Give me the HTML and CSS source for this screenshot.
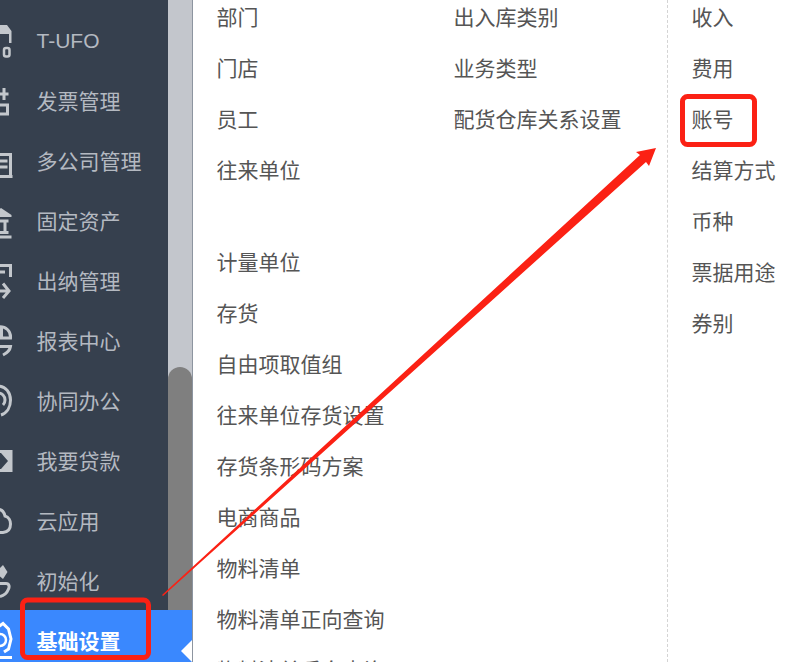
FILE: index.html
```html
<!DOCTYPE html>
<html>
<head>
<meta charset="utf-8">
<title>基础设置</title>
<link rel="stylesheet" href="styles.css">
</head>
<body>
<div class="app">
  <div class="side">
    <div class="side-top">
      <ul class="menu">
        <li class="menu-item latin">
          <svg class="ico" viewBox="0 0 14 40"><path class="fill" d="M-2 5 H7 L11.500 11 V23 H9 V14 H-2Z"/><rect class="thin" x="4" y="28" width="5.500" height="8.500" rx="2"/></svg>
          <span>T-UFO</span>
        </li>
        <li class="menu-item">
          <svg class="ico" viewBox="0 0 14 40"><path d="M4 8 V20 M-2 14 H8.500 M-2 25 H7.500 V34 H-2"/></svg>
          <span>发票管理</span>
        </li>
        <li class="menu-item">
          <svg class="ico" viewBox="0 0 14 40"><path d="M-2 14.500 H10.500 V36.500 M-2 21 H7.500 M-2 27 H7.500 M-2 36.500 H12.500"/></svg>
          <span>多公司管理</span>
        </li>
        <li class="menu-item">
          <svg class="ico" viewBox="0 0 14 40"><path class="fill" d="M-2 10 L1 8 L11.500 15 V17 H-2Z"/><path d="M5 21 V33 M-2 21 H8.500 M-2 32.500 H8.500 M-2 37 H11.500"/></svg>
          <span>固定资产</span>
        </li>
        <li class="menu-item">
          <svg class="ico" viewBox="0 0 14 40"><path d="M-2 5.500 H10.500 V17 M-2 12 H5 M-2 31 H8 M3 23.500 L9 31 L3 38"/></svg>
          <span>出纳管理</span>
        </li>
        <li class="menu-item">
          <svg class="ico" viewBox="0 0 14 40"><path d="M-2 7 C6 6 11 11 10.500 18 H-2 M-2 26.500 H10.500 C10 30 7 33 3 35"/><path class="fill" d="M-2 7 H3 V18 H-2Z"/></svg>
          <span>报表中心</span>
        </li>
        <li class="menu-item">
          <svg class="ico" viewBox="0 0 14 40"><path d="M-2 6 C6 6 10.500 13 10.500 20 C10.500 27 7 33 1 35 M-2 13 C2 13 5 16 5 20 C5 22 4 24 3 25"/></svg>
          <span>协同办公</span>
        </li>
        <li class="menu-item">
          <svg class="ico" viewBox="0 0 14 40"><path class="fill" d="M-2 10 H12.500 V32 H-2Z"/><path class="hole" d="M-2 13 H1 L8 21 L1 29 H-2Z"/></svg>
          <span>我要贷款</span>
        </li>
        <li class="menu-item">
          <svg class="ico" viewBox="0 0 14 40"><path d="M-2 9.500 C2 9 4 12 5 16 C9 17 10.500 21 10.500 24 C10.500 29 8 32 3 32.500 H-2"/></svg>
          <span>云应用</span>
        </li>
        <li class="menu-item">
          <svg class="ico" viewBox="0 0 14 40"><path class="fill" d="M-2 10 L3 5 L7.500 12 L3 19 L-2 15Z"/><path d="M-2 23.500 H6 C9.500 23.500 9.500 27 8.500 29 C7 33 4 35.500 0 36.500"/></svg>
          <span>初始化</span>
        </li>
      </ul>
      <div class="track"><div class="thumb"></div></div>
    </div>
    <div class="menu-item active">
      <svg class="ico" viewBox="0 0 14 40"><path d="M-2 7 L3 3.500 L8.500 9 L11 19 L8.500 29 L4 32 M-2 37.500 H12"/><circle class="thin" cx="0" cy="20" r="6"/></svg>
      <span>基础设置</span>
      <i class="caret"></i>
    </div>
  </div>
  <div class="panel">
    <div class="col col-one">
      <ul class="links">
        <li>部门</li>
        <li>门店</li>
        <li>员工</li>
        <li>往来单位</li>
      </ul>
      <ul class="links next-group">
        <li>计量单位</li>
        <li>存货</li>
        <li>自由项取值组</li>
        <li>往来单位存货设置</li>
        <li>存货条形码方案</li>
        <li>电商商品</li>
        <li>物料清单</li>
        <li>物料清单正向查询</li>
        <li>物料清单反向查询</li>
      </ul>
    </div>
    <div class="col col-two">
      <ul class="links">
        <li>出入库类别</li>
        <li>业务类型</li>
        <li>配货仓库关系设置</li>
      </ul>
    </div>
    <div class="col col-three">
      <ul class="links">
        <li>收入</li>
        <li>费用</li>
        <li>账号</li>
        <li>结算方式</li>
        <li>币种</li>
        <li>票据用途</li>
        <li>券别</li>
      </ul>
    </div>
  </div>
  <!-- red marks drawn over the screenshot -->
  <svg class="marks" width="800" height="662" viewBox="0 0 800 662">
    <rect x="22.500" y="600" width="126" height="57.500" rx="5"/>
    <rect x="682.500" y="96.500" width="72" height="48" rx="5"/>
    <path class="arrow" d="M162 595 L640 155 L636 152 L656 148 L649 166 L646 162 L163 596Z"/>
  </svg>
</div>
</body>
</html>
```
FILE: styles.css
```css
/* Menu screenshot */

html, body
{ margin: 0;
padding: 0;
}

body
{ width: 800px;
height: 662px;
overflow: hidden;
background-color: #fff;
font-family: "Liberation Sans", "Noto Sans CJK SC", sans-serif;
font-size: 21px;
}

ul
{ margin: 0;
padding: 0;
list-style: none;
}

.app
{ position: relative;
display: flex;
width: 800px;
height: 662px;
overflow: hidden;
}

/* Left side */

.side
{ display: flex;
flex-direction: column;
flex: none;
width: 192px;
height: 662px;
border-right: 1px solid #8d95a0;
}

.side-top
{ display: flex;
flex: none;
height: 610px;
}

.menu
{ flex: none;
width: 168px;
padding-top: 10px;
background-color: #36404e;
box-sizing: border-box;
}

.menu-item
{ display: flex;
align-items: center;
height: 60px;
color: #b4b9c1;
}

.menu-item span
{ margin-left: 22.500px;
}

.latin span
{ margin-top: 2px;
}

.ico
{ flex: none;
width: 14px;
height: 40px;
fill: none;
stroke: #c3c7cc;
stroke-width: 3;
}

.ico .fill
{ fill: #c3c7cc;
stroke: none;
}

.ico .hole
{ fill: #36404e;
stroke: none;
}

.ico .thin
{ stroke-width: 2.500;
}

.track
{ flex: 1;
display: flex;
flex-direction: column;
justify-content: flex-end;
background-color: #c3c6cc;
}

.thumb
{ height: 243px;
background-color: #7f7f7f;
border-radius: 12px 12px 0 0;
}

.active
{ flex: 1;
height: 52px;
background-color: #3a88fe;
color: #fff;
font-weight: bold;
}

.active .ico
{ stroke: #fff;
margin-top: 8px;
}

.active span
{ margin-top: 7px;
}

.caret
{ margin-left: auto;
margin-top: 30px;
border-style: solid;
border-width: 11px 11px 11px 0;
border-color: transparent #fff transparent transparent;
}

/* Right panel */

.panel
{ display: flex;
flex: 1;
padding-left: 23.500px;
color: #555;
}

.links
{ margin-top: -8px;
}

.links li
{ height: 51px;
line-height: 51px;
white-space: nowrap;
}

.links.next-group
{ margin-top: 41px;
}

.col-one
{ flex: none;
width: 237px;
}

.col-two
{ flex: none;
width: 213.500px;
}

.col-three
{ flex: 1;
padding-left: 23.500px;
border-left: 1px dashed #d4d4d4;
}

/* Annotation */

.marks
{ position: absolute;
top: 0;
left: 0;
fill: none;
stroke: #fb2114;
stroke-width: 5;
}

.marks .arrow
{ fill: #fb2114;
stroke: none;
}
```
